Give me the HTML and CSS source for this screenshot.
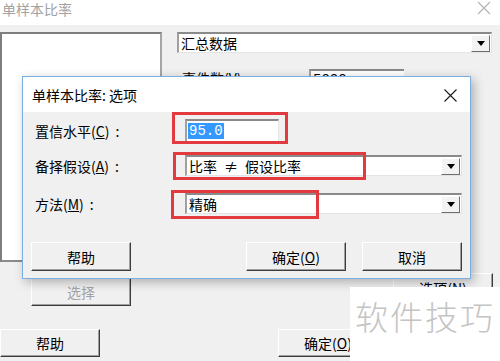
FILE: index.html
```html
<!DOCTYPE html>
<html lang="zh-CN">
<head>
<meta charset="utf-8">
<title>单样本比率</title>
<link rel="stylesheet" href="styles.css">
</head>
<body>
<div class="win">
  <div class="win-title">
    <span class="win-title-text">单样本比率</span>
    <svg class="win-close" width="14" height="14" viewBox="0 0 14 14"><path d="M1 1 L13 13 M13 1 L1 13" stroke="#b4b4b4" stroke-width="1.2" fill="none"/></svg>
  </div>
  <div class="win-body">
    <div class="top">
      <div class="listbox"></div>
      <div class="right">
        <div class="combo combo-wide">
          <span class="combo-text">汇总数据</span>
          <span class="drop"><span class="tri"></span></span>
        </div>
        <div class="field">
          <span class="field-label">事件数(<u>V</u>):</span>
          <span class="field-input">5000</span>
        </div>
      </div>
    </div>
    <div class="btnrow1">
      <div class="btn btn-disabled">选择</div>
      <div class="btn btn-opt">选项(<u>N</u>)</div>
    </div>
    <div class="btnrow2">
      <div class="btn">帮助</div>
      <div class="btn btn-ok">确定(<u>O</u>)</div>
    </div>
  </div>
</div>

<div class="dialog">
  <div class="dlg-title">
    <span>单样本比率: 选项</span>
    <svg class="dlg-close" width="13" height="13" viewBox="0 0 13 13"><path d="M0.5 0.5 L12.5 12.5 M12.5 0.5 L0.5 12.5" stroke="#1a1a1a" stroke-width="1.1" fill="none"/></svg>
  </div>
  <div class="dlg-body">
    <div class="form">
      <div class="row row1">
        <span class="label">置信水平(<u>C</u>)<span class="colon">:</span></span>
        <div class="input"><span class="sel">95.0</span></div>
      </div>
      <div class="row row2">
        <span class="label">备择假设(<u>A</u>)<span class="colon">:</span></span>
        <div class="combo combo-dlg">
          <span class="combo-text">比率<span class="ne">≠</span>假设比率</span>
          <span class="drop"><span class="tri"></span></span>
        </div>
      </div>
      <div class="row row3">
        <span class="label">方法(<u>M</u>)<span class="colon">:</span></span>
        <div class="combo combo-dlg">
          <span class="combo-text">精确</span>
          <span class="drop"><span class="tri"></span></span>
        </div>
      </div>
    </div>
    <div class="dlg-buttons">
      <div class="btn">帮助</div>
      <div class="btn-group">
        <div class="btn">确定(<u>O</u>)</div>
        <div class="btn">取消</div>
      </div>
    </div>
    <div class="mark mark1"></div>
    <div class="mark mark2"></div>
    <div class="mark mark3"></div>
  </div>
</div>

<div class="watermark">软件技巧</div>
</body>
</html>
```

FILE: styles.css
```css
html, body {
  margin: 0;
  padding: 0;
}
body {
  width: 500px;
  height: 361px;
  overflow: hidden;
  position: relative;
  background: #f0f0f0;
  font-family: "Noto Sans CJK SC", "Noto Sans", sans-serif;
  font-size: 14px;
  color: #000;
}

/* background window */
.win-title {
  height: 25px;
  background: #fff;
  display: flex;
  justify-content: space-between;
  align-items: flex-start;
}
.win-title-text {
  padding-left: 2px;
  color: #a2a2a2;
  font-size: 14px;
  line-height: 18px;
}
.win-close {
  margin-top: 1px;
  margin-right: 9px;
}
.win-body {
  padding-top: 7px;
}
.top {
  display: flex;
  height: 230px;
}
.listbox {
  box-sizing: border-box;
  width: 162px;
  height: 230px;
  background: #fff;
  border: 2px solid;
  border-color: #7e7e7e #a5a5a5 #8a8a8a #7e7e7e;
}
.right {
  margin-left: 15px;
  width: 315px;
}
.combo {
  box-sizing: border-box;
  height: 21px;
  background: #fff;
  border-top: 2px solid #8a8a8a;
  border-left: 2px solid #a0a0a0;
  border-right: 1px solid #e3e3e3;
  border-bottom: 1px solid #e3e3e3;
  display: flex;
  align-items: center;
  justify-content: space-between;
}
.combo-wide {
  width: 315px;
}
.combo-text {
  padding-left: 2px;
  line-height: 18px;
  white-space: nowrap;
}
.drop {
  box-sizing: border-box;
  width: 19px;
  height: 17px;
  margin-right: 1px;
  background: #f3f3f3;
  border: 1px solid;
  border-color: #fff #6e6e6e #6e6e6e #fff;
  display: flex;
  align-items: center;
  justify-content: center;
}
.tri {
  width: 0;
  height: 0;
  border-left: 4px solid transparent;
  border-right: 4px solid transparent;
  border-top: 5px solid #000;
}
.field {
  margin-top: 16px;
  display: flex;
  align-items: flex-start;
}
.field-label {
  width: 127px;
  padding-left: 5px;
  line-height: 18px;
}
.field-input {
  box-sizing: border-box;
  width: 95px;
  height: 22px;
  background: #fff;
  border-top: 2px solid #8a8a8a;
  border-left: 2px solid #a0a0a0;
  font-family: "Liberation Mono", monospace;
  padding-left: 2px;
  line-height: 18px;
}
.btn {
  box-sizing: border-box;
  width: 100px;
  height: 29px;
  background: #f0f0f0;
  border: 1px solid;
  border-color: #fff #3c3c3c #3c3c3c #fff;
  box-shadow: inset -1px -1px 0 #a0a0a0;
  display: flex;
  align-items: center;
  justify-content: center;
  font-size: 14px;
  line-height: 18px;
}
.btn-disabled {
  color: #a3a3a3;
  height: 28px;
}
.btnrow1 {
  margin-top: 16px;
  display: flex;
  align-items: flex-start;
  padding-left: 31px;
}
.btn-opt {
  margin-left: 262px;
  margin-top: -5px;
}
.btnrow2 {
  margin-top: 23px;
  display: flex;
}
.btnrow2 .btn {
  height: 28px;
}
.btn-ok {
  margin-left: 178px;
}

/* dialog */
.dialog {
  position: absolute;
  left: 22px;
  top: 76px;
  width: 449px;
  height: 203px;
  box-sizing: border-box;
  border: 1px solid #79aee3;
  background: #f0f0f0;
  box-shadow: 3px 3px 10px rgba(0, 0, 0, 0.28);
}
.dlg-title {
  height: 35px;
  background: #fff;
  display: flex;
  align-items: center;
  justify-content: space-between;
  padding-left: 9px;
  padding-right: 13px;
  font-size: 14px;
}
.dlg-close {
  margin-top: 1px;
}
.dlg-body {
  position: relative;
  height: 166px;
  padding: 7px 8px 0 8px;
  box-sizing: border-box;
}
.form {
  padding-left: 4px;
}
.row {
  display: grid;
  grid-template-columns: 150px auto;
  align-items: center;
  justify-content: start;
}
.row1 {
  height: 23px;
  margin-bottom: 13px;
}
.row2 {
  height: 21px;
  margin-bottom: 17px;
}
.row3 {
  height: 21px;
}
.label {
  white-space: nowrap;
  line-height: 18px;
}
.colon {
  margin-left: 6px;
}
.input {
  box-sizing: border-box;
  width: 94px;
  height: 23px;
  background: #fff;
  border-top: 2px solid #8a8a8a;
  border-left: 2px solid #a0a0a0;
  border-right: 1px solid #e6e6e6;
  border-bottom: 1px solid #e6e6e6;
  display: flex;
  align-items: center;
}
.sel {
  margin-left: 1px;
  background: #3399ff;
  color: #fff;
  font-family: "Liberation Mono", monospace;
  font-size: 14px;
  line-height: 16px;
  padding: 0 1px;
}
.combo-dlg {
  width: 277px;
}
.combo-dlg .combo-text {
  padding-left: 2px;
}
.ne {
  display: inline-block;
  width: 14px;
  margin: 0 7px;
  text-align: center;
}
.dlg-buttons {
  margin-top: 28px;
  display: flex;
  justify-content: space-between;
}
.btn-group {
  display: flex;
  gap: 16px;
}

/* red annotation boxes */
.mark {
  position: absolute;
  box-sizing: border-box;
  border: 3px solid #e23a3e;
}
.mark1 {
  left: 149px;
  top: 0;
  width: 116px;
  height: 32px;
}
.mark2 {
  left: 150px;
  top: 40px;
  width: 193px;
  height: 28px;
}
.mark3 {
  left: 148px;
  top: 78px;
  width: 148px;
  height: 29px;
}

/* watermark */
.watermark {
  position: absolute;
  left: 350px;
  top: 287px;
  width: 150px;
  height: 74px;
  background: #fff;
  color: #c4c4c4;
  font-size: 33px;
  font-weight: 300;
  letter-spacing: 2px;
  line-height: 40px;
  padding-left: 5px;
  padding-top: 9px;
  box-sizing: border-box;
  white-space: nowrap;
}
```
